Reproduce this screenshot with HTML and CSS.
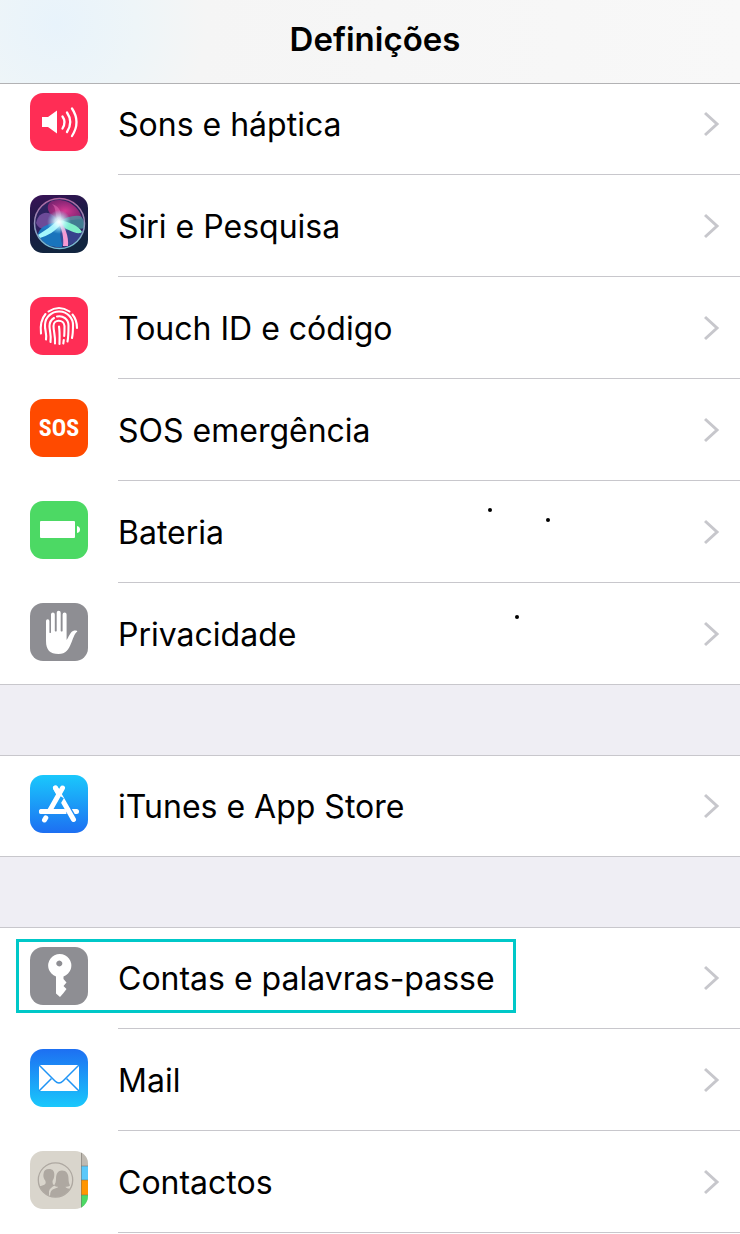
FILE: index.html
```
<!DOCTYPE html>
<html lang="pt">
<head>
    <meta charset="UTF-8">
    <meta name="viewport" content="width=device-width, initial-scale=1">
    <title>Definições</title>
    <link rel="stylesheet" href="styles.css">
</head>
<body>
    <header class="navbar">
        <h1>Definições</h1>
    </header>

    <main class="settings">
        <ul class="group group-scrolled">
            <li>
                <a href="#sons" class="row">
                    <span class="item">
                        <svg class="icon icon-red" viewBox="0 0 58 58" aria-hidden="true">
                            <path d="M12 24h6l9-6.500v23L18 34h-6z" fill="#fff"/>
                            <g fill="none" stroke="#fff" stroke-width="2.300" stroke-linecap="round">
                                <path d="M32.500 23.500q4 5.500 0 12"/>
                                <path d="M37 19.500q6.500 9.500 0 19.500"/>
                                <path d="M42 15.500q9 13.500 0 27.500"/>
                            </g>
                        </svg>
                        <span class="label">Sons e háptica</span>
                    </span>
                    <svg class="chevron" viewBox="0 0 16 26" aria-hidden="true"><path d="M1 2l12 11L1 24"/></svg>
                </a>
            </li>
            <li>
                <a href="#siri" class="row">
                    <span class="item">
                        <svg class="icon" viewBox="0 0 58 58" aria-hidden="true">
                            <defs>
                                <linearGradient id="siriBg" x1="0" y1="0" x2="0.300" y2="1">
                                    <stop offset="0" stop-color="#3a1257"/>
                                    <stop offset="0.500" stop-color="#1b1b45"/>
                                    <stop offset="1" stop-color="#11253f"/>
                                </linearGradient>
                                <linearGradient id="siriRing" x1="0" y1="0" x2="0" y2="1">
                                    <stop offset="0" stop-color="#b0659f"/>
                                    <stop offset="1" stop-color="#72bfd4"/>
                                </linearGradient>
                                <radialGradient id="siriPink" cx="0.500" cy="0.500" r="0.600">
                                    <stop offset="0" stop-color="#d63a94"/>
                                    <stop offset="1" stop-color="#a8247a" stop-opacity="0.600"/>
                                </radialGradient>
                                <radialGradient id="siriGlow" cx="0.500" cy="0.500" r="0.500">
                                    <stop offset="0" stop-color="#fff"/>
                                    <stop offset="0.350" stop-color="#d8fbff" stop-opacity="0.850"/>
                                    <stop offset="1" stop-color="#8fe9ff" stop-opacity="0"/>
                                </radialGradient>
                            </defs>
                            <rect width="58" height="58" fill="url(#siriBg)"/>
                            <circle cx="29.500" cy="28.500" r="25" fill="#2d2260"/>
                            <path d="M29 27C18 20 14 10 22 6c14-4 28 6 30 18-8 1-16 1-23 3z" fill="url(#siriPink)"/>
                            <path d="M29 27C21 14 9 15 6 28c3 8 13 8 23-1z" fill="#7c55a6" opacity="0.800"/>
                            <path d="M29 27C18 28 8 33 8 40c5 10 16 13 24 12 3-7 0-16-3-25z" fill="#1682cc" opacity="0.850"/>
                            <path d="M29 27c2 9 0 19 5 25 9-2 16-8 19-16-7-1-17-3-24-9z" fill="#3a4894" opacity="0.850"/>
                            <path d="M29 27c4 1 21 9 25 6 1-5-1-11-4-12-7-1-14 1-21 6z" fill="#4aa4a8" opacity="0.700"/>
                            <path d="M29 24C22 31 14 36 8 40l2 3c7-2 16-7 21-14z" fill="#a4f6fb"/>
                            <path d="M28 25c10 1 21 6 24 12-4 4-16-3-24-8z" fill="#7ff0c8"/>
                            <path d="M27 26c5 6 7 17 6 25h5c1-9-3-21-9-25z" fill="#f59ad3"/>
                            <path d="M29 28C24 20 27 13 22 9c9 3 11 11 8 19z" fill="#ec73bd" opacity="0.500"/>
                            <circle cx="29" cy="27" r="12" fill="url(#siriGlow)"/>
                            <circle cx="29.500" cy="28.500" r="25" fill="none" stroke="url(#siriRing)" stroke-width="1.500"/>
                        </svg>
                        <span class="label">Siri e Pesquisa</span>
                    </span>
                    <svg class="chevron" viewBox="0 0 16 26" aria-hidden="true"><path d="M1 2l12 11L1 24"/></svg>
                </a>
            </li>
            <li>
                <a href="#touch-id" class="row">
                    <span class="item">
                        <svg class="icon icon-red" viewBox="0 0 58 58" aria-hidden="true">
                            <g fill="none" stroke="#fff" stroke-width="2.100" stroke-linecap="round">
                                <path d="M18.500 14.500q10.500-7 21 0"/>
                                <path d="M15.500 17Q9.500 24 11 36.500"/>
                                <path d="M42.500 17.500Q47 23 47 31"/>
                                <path d="M16 42.500C17 36 14.500 33 15 27.500a14 13.500 0 0 1 28 1c0 5 0 8-1 12.500"/>
                                <path d="M20.500 45c1-7-1-11-1-16 0-4 2-6.500 4.500-8"/>
                                <path d="M27 19.500c6-1.500 11.500 3 11.500 9 0 7 0 11-1 16"/>
                                <path d="M25 46.500c.500-8-1.500-12-1.500-17.500 0-7 10.500-7 11 0 0 4 0 7-.300 10"/>
                                <path d="M33.800 43l-.500 3.500"/>
                                <path d="M29.500 47c0-6 .500-11-.500-17.500"/>
                            </g>
                        </svg>
                        <span class="label">Touch ID e código</span>
                    </span>
                    <svg class="chevron" viewBox="0 0 16 26" aria-hidden="true"><path d="M1 2l12 11L1 24"/></svg>
                </a>
            </li>
            <li>
                <a href="#sos" class="row">
                    <span class="item">
                        <span class="icon icon-sos" aria-hidden="true">SOS</span>
                        <span class="label">SOS emergência</span>
                    </span>
                    <svg class="chevron" viewBox="0 0 16 26" aria-hidden="true"><path d="M1 2l12 11L1 24"/></svg>
                </a>
            </li>
            <li>
                <a href="#bateria" class="row">
                    <span class="item">
                        <svg class="icon icon-green" viewBox="0 0 58 58" aria-hidden="true">
                            <rect x="10" y="20" width="35" height="17" rx="1" fill="#fff"/>
                            <path d="M47 25q3 .500 3 3.500t-3 3.500z" fill="#fff"/>
                        </svg>
                        <span class="label">Bateria</span>
                    </span>
                    <svg class="chevron" viewBox="0 0 16 26" aria-hidden="true"><path d="M1 2l12 11L1 24"/></svg>
                </a>
            </li>
            <li>
                <a href="#privacidade" class="row">
                    <span class="item">
                        <svg class="icon icon-gray" viewBox="0 0 58 58" aria-hidden="true">
                            <path fill="#fff" d="M16 18a1.700 1.700 0 0 1 3.400 0v11.500q.800 1 1.600 0v-18a1.900 1.900 0 0 1 3.800 0V28q1 1 1.900 0V9.800a2 2 0 0 1 4 0V28q1 1 1.900 0V11.500a2 2 0 0 1 4 0V37c2-2.500 3.500-8 6.500-9 1.800-.700 4.200-.500 4.200.500-3.300 2.500-4.300 8-6.300 12C38.500 46.500 36 51 28.500 51 20 51 16 47 16 38z"/>
                        </svg>
                        <span class="label">Privacidade</span>
                    </span>
                    <svg class="chevron" viewBox="0 0 16 26" aria-hidden="true"><path d="M1 2l12 11L1 24"/></svg>
                </a>
            </li>
            <li class="specks" aria-hidden="true">
                <span class="speck speck-1"></span>
                <span class="speck speck-2"></span>
                <span class="speck speck-3"></span>
            </li>
        </ul>

        <ul class="group">
            <li>
                <a href="#app-store" class="row">
                    <span class="item">
                        <svg class="icon" viewBox="0 0 58 58" aria-hidden="true">
                            <defs>
                                <linearGradient id="storeBg" x1="0" y1="0" x2="0" y2="1">
                                    <stop offset="0" stop-color="#1ac8fc"/>
                                    <stop offset="1" stop-color="#1d6ff2"/>
                                </linearGradient>
                            </defs>
                            <rect width="58" height="58" fill="url(#storeBg)"/>
                            <g fill="none" stroke="#fff" stroke-width="5" stroke-linecap="round">
                                <path d="M11.500 36.500H46.500"/>
                                <path d="M37 32.500L43 43" stroke="#1e8cf6" stroke-width="7" stroke-linecap="butt"/>
                                <path d="M25.500 13L43.500 44.500"/>
                                <path d="M31 21.500L27.500 27.500" stroke="#1ea2f8" stroke-width="6.500" stroke-linecap="butt"/>
                                <path d="M32.500 13L19.500 36"/>
                                <path d="M25.500 13l3.500 6"/>
                                <path d="M11.500 36.500H34"/>
                                <path d="M15.800 42.800l-1.300 2.200"/>
                            </g>
                        </svg>
                        <span class="label">iTunes e App Store</span>
                    </span>
                    <svg class="chevron" viewBox="0 0 16 26" aria-hidden="true"><path d="M1 2l12 11L1 24"/></svg>
                </a>
            </li>
        </ul>

        <ul class="group group-open">
            <li>
                <a href="#contas" class="row">
                    <span class="item highlighted">
                        <svg class="icon icon-gray" viewBox="0 0 58 58" aria-hidden="true">
                            <path fill="#fff" fill-rule="evenodd" d="M26 29.500a11.600 11.600 0 1 1 7.500 0V32l3 3.500-3 3.500 3 3-3 4-3.500 4-4-3.500zM29.300 13.500a3 3 0 1 0 .010 0z"/>
                        </svg>
                        <span class="label">Contas e palavras-passe</span>
                    </span>
                    <svg class="chevron" viewBox="0 0 16 26" aria-hidden="true"><path d="M1 2l12 11L1 24"/></svg>
                </a>
            </li>
            <li>
                <a href="#mail" class="row">
                    <span class="item">
                        <svg class="icon" viewBox="0 0 58 58" aria-hidden="true">
                            <defs>
                                <linearGradient id="mailBg" x1="0" y1="0" x2="0" y2="1">
                                    <stop offset="0" stop-color="#1d6ff2"/>
                                    <stop offset="1" stop-color="#1ac8fc"/>
                                </linearGradient>
                            </defs>
                            <rect width="58" height="58" fill="url(#mailBg)"/>
                            <rect x="9" y="16" width="40" height="26" fill="#fff"/>
                            <g fill="none" stroke="#1f94f5" stroke-width="1.500">
                                <path d="M9 16l16 16q4 4 8 0l16-16"/>
                                <path d="M9 42l12.500-12.500M49 42L36.500 29.500"/>
                            </g>
                        </svg>
                        <span class="label">Mail</span>
                    </span>
                    <svg class="chevron" viewBox="0 0 16 26" aria-hidden="true"><path d="M1 2l12 11L1 24"/></svg>
                </a>
            </li>
            <li>
                <a href="#contactos" class="row">
                    <span class="item">
                        <svg class="icon" viewBox="0 0 58 58" aria-hidden="true">
                            <defs>
                                <clipPath id="badge"><circle cx="25.500" cy="29" r="17"/></clipPath>
                            </defs>
                            <rect width="58" height="58" fill="#d9d5cc"/>
                            <rect x="51" width="7" height="15" fill="#bfbab2"/>
                            <rect x="51" y="15" width="7" height="14" fill="#5ac8fa"/>
                            <rect x="51" y="29" width="7" height="15" fill="#ff9500"/>
                            <rect x="51" y="44" width="7" height="14" fill="#4cd964"/>
                            <path d="M51.500 0v58M51 15h7M51 29h7M51 44h7" stroke="#6f6b66" stroke-opacity="0.500" fill="none"/>
                            <g clip-path="url(#badge)" fill="#aea8a1">
                                <path d="M19 18c4 0 5.500 2.500 5.300 6 0 3-1 4.500-1.800 6 0 3 .500 3.500 2 4.500-3 2-5 3-5.500 6v6H7V36c4-1 8-2 8.500-3.500.300-1 .200-2-.300-3C14 28 13 26 13.500 23c.200-3.500 2-5 5.500-5z"/>
                                <path d="M32 19.500c4.500 0 6.500 3.500 6.500 8 0 3 .500 5 1.500 7-1.500 1.200-3 1.300-4.500 1.300 0 2 6 2 8.500 3.200V48H20c0-8 1-9 5-10.500 2-.700 3-.800 3-1.700-1.500 0-3-.300-4-1.300 1.500-2 2-4 2-7 0-5 2-8 6-8z"/>
                            </g>
                            <circle cx="25.500" cy="29" r="17.200" fill="none" stroke="#aea8a1" stroke-width="1.300"/>
                        </svg>
                        <span class="label">Contactos</span>
                    </span>
                    <svg class="chevron" viewBox="0 0 16 26" aria-hidden="true"><path d="M1 2l12 11L1 24"/></svg>
                </a>
            </li>
        </ul>
    </main>
</body>
</html>
```
FILE: styles.css
```
* {
    box-sizing: border-box;
}

body {
    margin: 0;
    font-family: Inter, "Liberation Sans", sans-serif;
    background: #efeef4;
    color: #000;
}

.navbar {
    position: sticky;
    top: 0;
    z-index: 2;
    height: 84px;
    display: flex;
    align-items: center;
    justify-content: center;
    padding: 0 0 6px 10px;
    background: radial-gradient(circle at 56px 24px, #e8f3fb, #eef5f8 80px, #f5f5f5 150px, #f8f8f8 100%);
    border-bottom: 1px solid #b2b2b4;
}

.navbar h1 {
    margin: 0;
    font-size: 33px;
    line-height: 40px;
    font-weight: 600;
}

.group {
    list-style: none;
    margin: 0 0 70px;
    padding: 0;
    position: relative;
    background: #fff;
    border-top: 1px solid #c8c7cc;
    border-bottom: 1px solid #c8c7cc;
}

/* the first group starts partly under the navigation bar */
.group-scrolled {
    margin-top: -12px;
}

.group-open {
    margin-bottom: 0;
    padding-bottom: 1px;
    border-bottom: none;
}

.row {
    height: 102px;
    display: flex;
    align-items: center;
    justify-content: space-between;
    padding: 0 20px 0 30px;
    color: inherit;
    text-decoration: none;
    background: linear-gradient(#c8c7cc, #c8c7cc) 118px 100% / 100% 1px no-repeat;
}

.group-open li:first-child .row {
    height: 101px;
    padding-bottom: 1px;
}

/* last rows use the full width border of the group */
.group:not(.group-open) li:last-child .row {
    height: 100px;
    background: none;
}

.group-scrolled li:nth-last-child(2) .row {
    height: 101px;
    background: none;
}

.item {
    display: flex;
    align-items: center;
    gap: 30px;
    padding-bottom: 4px;
}

.icon {
    width: 58px;
    height: 58px;
    flex-shrink: 0;
    display: block;
    border-radius: 13px;
    overflow: hidden;
}

.icon-red {
    background: #ff2d55;
}

.icon-green {
    background: #4cd964;
}

.icon-gray {
    background: #8e8e93;
}

.icon-sos {
    display: flex;
    align-items: center;
    justify-content: center;
    background: #ff4a00;
    color: #fff;
    font-family: "Liberation Sans Narrow", "Roboto Condensed", Roboto, sans-serif;
    font-size: 24px;
    font-weight: 700;
}

.label {
    font-size: 32px;
    line-height: 40px;
    padding-top: 6px;
}

.chevron {
    width: 16px;
    height: 26px;
    flex-shrink: 0;
    fill: none;
    stroke: #c7c7cc;
    stroke-width: 3;
}

.highlighted {
    position: relative;
}

.highlighted::after {
    content: "";
    position: absolute;
    top: -8px;
    right: -21px;
    bottom: -4px;
    left: -14px;
    border: 3px solid #00c8c8;
}

.speck {
    position: absolute;
    width: 4px;
    height: 4px;
    border-radius: 50%;
    background: #000;
}

.speck-1 {
    left: 488px;
    top: 435px;
}

.speck-2 {
    left: 546px;
    top: 445px;
}

.speck-3 {
    left: 515px;
    top: 542px;
}
```
